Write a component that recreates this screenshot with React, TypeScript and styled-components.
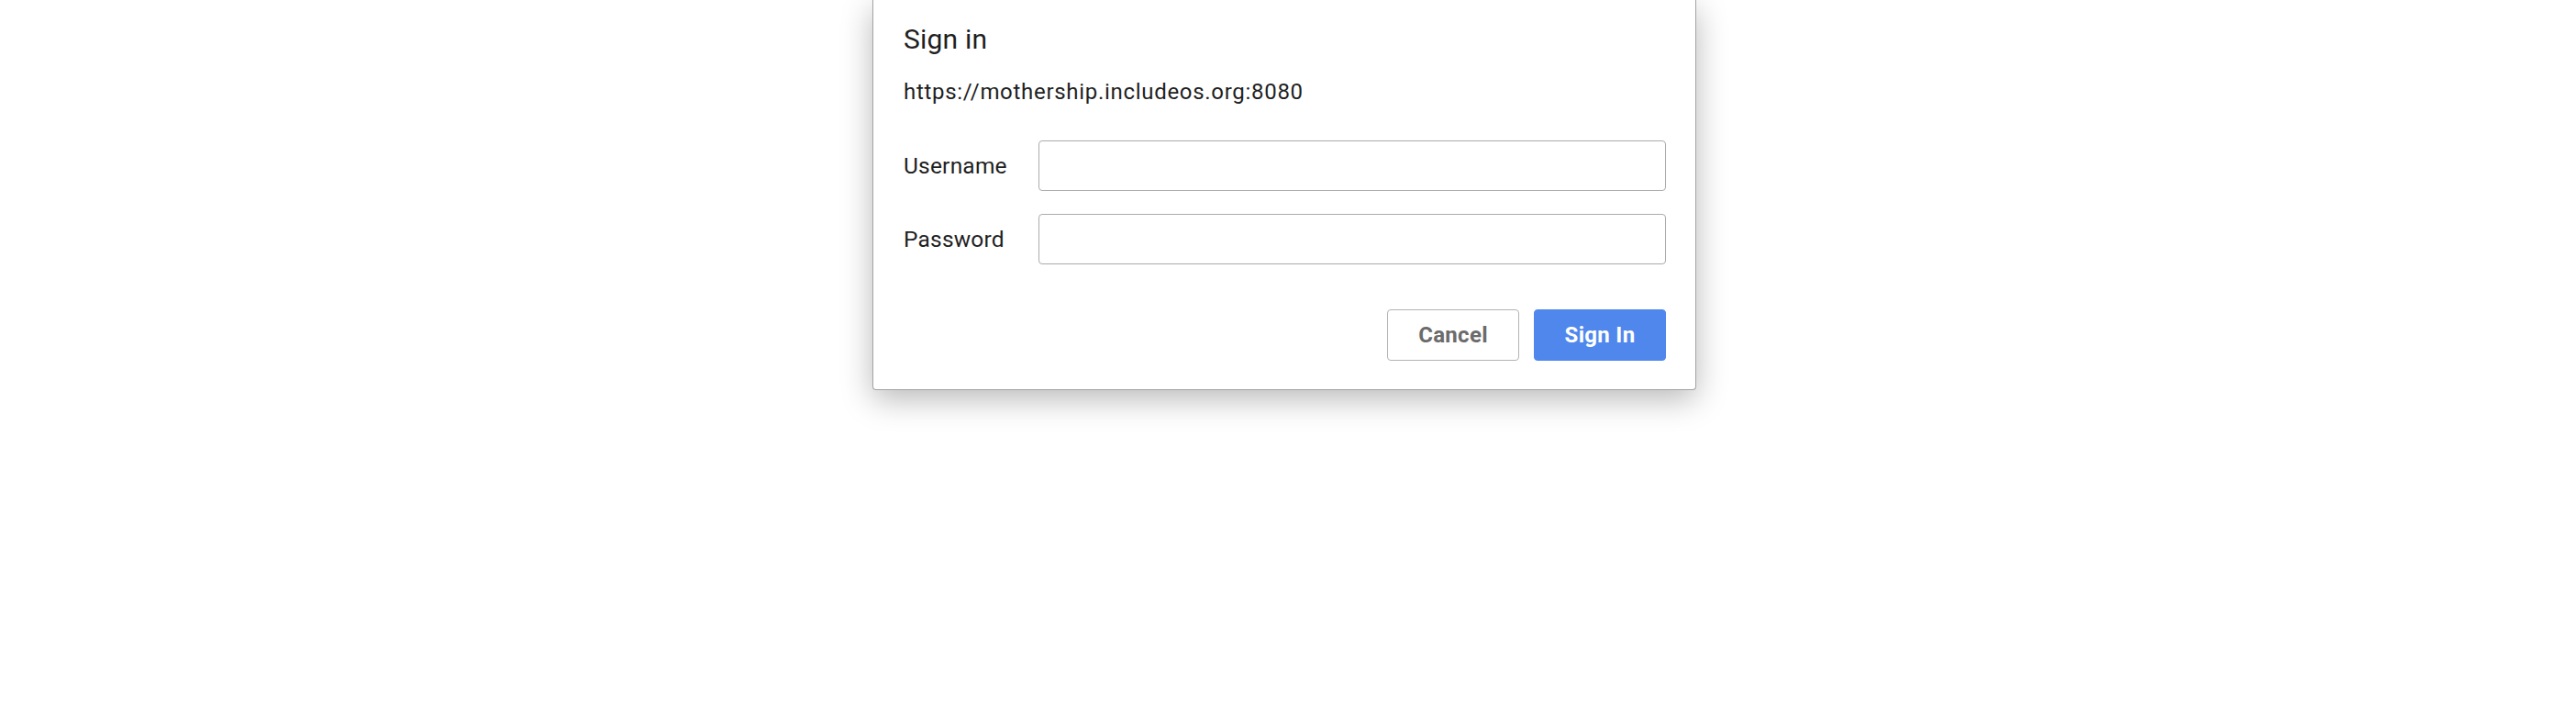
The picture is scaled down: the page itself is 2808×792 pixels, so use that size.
import styled, { createGlobalStyle } from 'styled-components';

const GlobalStyle = createGlobalStyle`
  html, body {
    margin: 0;
    padding: 0;
    background: #ffffff;
  }
  body {
    font-family: Roboto, "Liberation Sans", Arial, sans-serif;
    color: #1f1f1f;
  }
`;

const Page = styled.div`
  width: 2808px;
  height: 792px;
  overflow: hidden;
`;

const Dialog = styled.form`
  box-sizing: border-box;
  width: 898px;
  margin-left: 951px;
  padding: 25px 32px 31px 33px;
  background: #ffffff;
  border: 1px solid #a3a3a3;
  border-top: none;
  border-radius: 0 0 4px 4px;
  box-shadow: 0 10px 34px rgba(0, 0, 0, 0.28);
  display: flex;
  flex-direction: column;
`;

const Title = styled.h1`
  margin: 0;
  font-size: 30px;
  line-height: 36px;
  font-weight: 400;
  letter-spacing: 0.2px;
`;

const Origin = styled.div`
  margin-top: 24px;
  font-size: 24px;
  line-height: 30px;
  letter-spacing: 0.7px;
`;

const Fields = styled.div`
  margin-top: 38px;
  display: grid;
  grid-template-columns: 147px 1fr;
  row-gap: 25px;
  align-items: center;
`;

const Label = styled.label`
  font-size: 24.5px;
  line-height: 30px;
  letter-spacing: 0.2px;
`;

const Input = styled.input`
  box-sizing: border-box;
  height: 55px;
  width: 100%;
  border: 1px solid #ababab;
  border-radius: 4px;
  background: #ffffff;
  padding: 0 12px;
  font-size: 24px;
  outline: none;
`;

const Actions = styled.div`
  margin-top: 49px;
  display: flex;
  justify-content: flex-end;
  gap: 16px;
`;

const Button = styled.button<{ primary?: boolean }>`
  box-sizing: border-box;
  width: 144px;
  height: 56px;
  border-radius: 4px;
  border: 1px solid ${p => (p.primary ? '#5087ec' : '#b3b3b3')};
  background: ${p => (p.primary ? '#5087ec' : '#ffffff')};
  color: ${p => (p.primary ? '#ffffff' : '#6b6b6b')};
  font-family: Roboto, "Liberation Sans", Arial, sans-serif;
  font-size: 24px;
  font-weight: 700;
  letter-spacing: 0.3px;
  cursor: pointer;
`;

export default function App() {
  return (
    <Page>
      <GlobalStyle />
      <Dialog onSubmit={e => e.preventDefault()}>
        <Title>Sign in</Title>
        <Origin>https://mothership.includeos.org:8080</Origin>
        <Fields>
          <Label htmlFor="username">Username</Label>
          <Input id="username" type="text" />
          <Label htmlFor="password">Password</Label>
          <Input id="password" type="password" />
        </Fields>
        <Actions>
          <Button type="button">Cancel</Button>
          <Button type="submit" primary>Sign In</Button>
        </Actions>
      </Dialog>
    </Page>
  );
}
